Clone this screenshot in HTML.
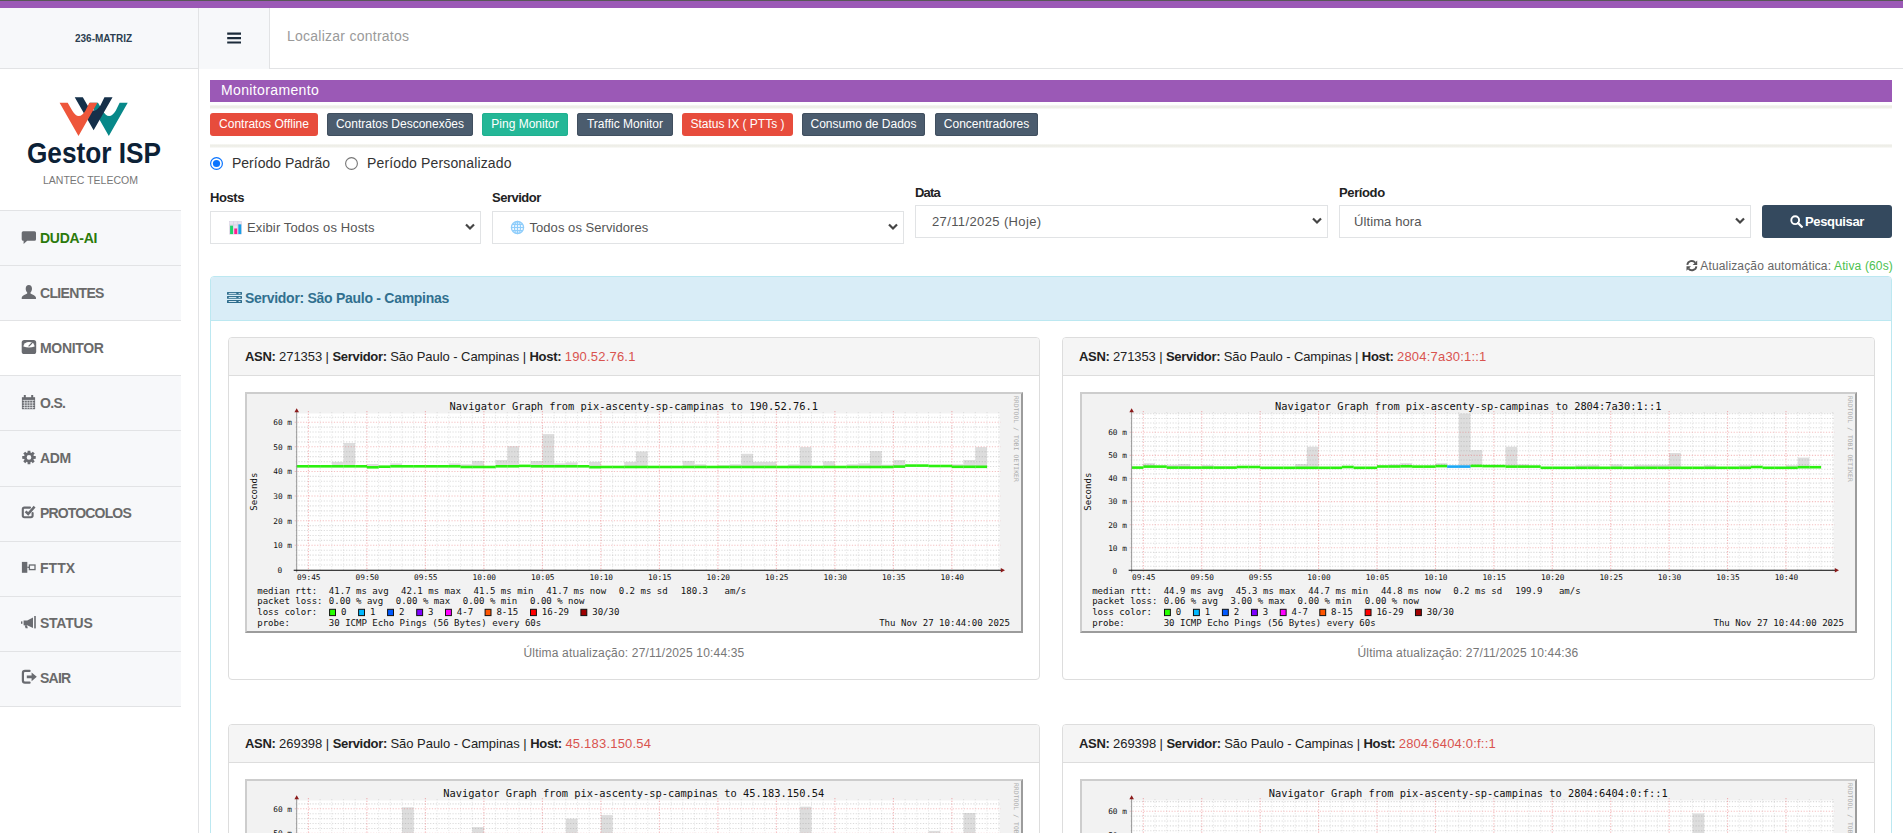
<!DOCTYPE html>
<html lang="pt-br"><head><meta charset="utf-8"><title>Monitoramento</title>
<style>
*{box-sizing:border-box;margin:0;padding:0}
html,body{width:1903px;height:833px;overflow:hidden;background:#fff}
body{font-family:"Liberation Sans",sans-serif;color:#333;position:relative}
.abs{position:absolute}
.t{position:absolute;white-space:nowrap;line-height:1}
#topline{left:0;top:0;width:1903px;height:8px;background:#9b59b6;border-top:1px solid #575757}
#brand{left:0;top:8px;width:198px;height:61px;background:#f7f8fa;border-bottom:1px solid #e2e3e5}
#sideborder{left:198px;top:8px;width:1px;height:825px;background:#e2e3e5}
#burger{left:199px;top:8px;width:71px;height:61px;background:#f7f8fa;border-right:1px solid #e2e3e5}
#hdrline{left:270px;top:68px;width:1633px;height:1px;background:#e2e3e5}
.mi{position:absolute;left:0;width:181px;background:#f7f8fa;border-top:1px solid #e2e3e5}
.mi.act{background:#fff}
.mi b{position:absolute;left:40px;top:20px;font-size:14px;font-weight:bold;color:#6a6a6a;line-height:1;white-space:nowrap}
.mi svg{position:absolute}
#pbar{left:210px;top:80px;width:1682px;height:22px;background:#9b59b6}
.hr{left:210px;width:1682px;height:4px;background:linear-gradient(#f8f8f5,#eeeee8 35%,#efefe9 62%,#fbfbf9)}
.btn{position:absolute;top:113px;height:23px;border-radius:3px;color:#fff;font-size:12px;line-height:23px;text-align:center;white-space:nowrap}
.red{background:#e74c3c}.dk{background:#4b5c6e;box-shadow:inset 0 0 0 1px #404f5f}.grn{background:#24b797;box-shadow:inset 0 0 0 1px #1fb08f}
.lbl{font-weight:bold;font-size:13px;color:#222}
.sel{position:absolute;height:33px;border:1px solid #e1e3e5;background:#fff}
.sel span{position:absolute;top:9px;font-size:13px;color:#555;line-height:1;white-space:nowrap}
.sel svg{position:absolute}
#panel{left:210px;top:276px;width:1682px;height:600px;border:1px solid #bce8f1;border-radius:4px 4px 0 0;background:#fff}
#phead{left:0;top:0;width:1680px;height:44px;background:#d9edf7;border-bottom:1px solid #bce8f1;border-radius:3px 3px 0 0}
.card{position:absolute;width:812px;border:1px solid #ddd;border-radius:4px;background:#fff}
.chead{position:absolute;left:0;top:0;width:810px;height:38px;background:#f5f5f5;border-bottom:1px solid #ddd;border-radius:3px 3px 0 0}
.chead span{position:absolute;left:16px;top:12px;font-size:13px;letter-spacing:-0.1px;line-height:1;color:#222;white-space:nowrap}
.chead i{font-style:normal;color:#d9534f;letter-spacing:0.2px}
.chead b{letter-spacing:-0.32px}
.rrd{display:block}
.upd{position:absolute;left:0;width:810px;text-align:center;font-size:12px;letter-spacing:0.18px;color:#777;line-height:1}
</style></head><body>
<div id="topline" class="abs"></div>
<div id="brand" class="abs"><span class="t" style="left:75px;top:26px;font-size:10px;font-weight:bold;color:#2c3e50">236-MATRIZ</span></div>
<div id="sideborder" class="abs"></div>
<div id="burger" class="abs"><svg class="abs" style="left:28px;top:23.5px" width="15" height="13" viewBox="0 0 15 13"><path d="M0.2 1.6H14M0.2 6.1H14M0.2 10.5H14" stroke="#1c2b3a" stroke-width="2.2"/></svg></div>
<div id="hdrline" class="abs"></div>
<span class="t" style="left:287px;top:29px;font-size:14px;letter-spacing:0.25px;color:#9a9a9a">Localizar contratos</span>
<svg class="abs" style="left:20px;top:90px" width="150" height="80" viewBox="0 0 150 80">
<path d="M69.92 12.73L78.02 12.73L82.64 20.71C84.32 23.71 86.72 26.11 89.12 26.11C91.52 26.11 93.93 23.71 95.73 20.71L99.63 12.85L107.73 12.85L88.82 45.92Z" fill="#078889"/>
<path d="M54.73 7.14L62.83 7.14L67.45 15.13C69.14 18.13 71.54 20.53 73.94 20.53C76.34 20.53 78.74 18.13 80.54 15.13L84.44 7.26L92.55 7.26L73.64 40.34Z" fill="#15304a"/>
<path d="M39.60 12.73L47.71 12.73L52.33 20.71C54.01 23.71 56.41 26.11 58.81 26.11C61.21 26.11 63.61 23.71 65.41 20.71L69.32 12.85L77.42 12.85L58.51 45.92Z" fill="#ee563b"/>
<text x="6.9" y="72.7" font-family="'Liberation Sans',sans-serif" font-weight="bold" font-size="29.3" fill="#0c2136" textLength="134.2" lengthAdjust="spacingAndGlyphs">Gestor ISP</text>
</svg>
<span class="t" style="left:43px;top:175px;font-size:10.5px;color:#777">LANTEC TELECOM</span>
<div class="mi" style="top:210px;height:55px"><svg style="left:21px;top:18px" width="17" height="17" viewBox="0 0 17 17"><path d="M2.2 2.2H13.5Q15 2.2 15 3.7V10.3Q15 11.8 13.5 11.8H6.2L2.6 14.9V11.8H2.2Q0.7 11.8 0.7 10.3V3.7Q0.7 2.2 2.2 2.2Z" fill="#696b70"/></svg><b style="letter-spacing:-0.28px;color:#2b7a0b">DUDA-AI</b></div>
<div class="mi" style="top:265px;height:55px"><svg style="left:21px;top:18px" width="17" height="17" viewBox="0 0 17 17"><path d="M7.8 1.1C9.9 1.1 11 2.7 11 4.7C11 6.2 10.4 7.6 9.5 8.4V9.4C11 10.3 14.3 11.2 14.9 13.2L15 15H0.7L0.8 13.2C1.4 11.2 4.7 10.3 6.2 9.4V8.4C5.3 7.6 4.7 6.2 4.7 4.7C4.7 2.7 5.8 1.1 7.8 1.1Z" fill="#696b70"/></svg><b style="letter-spacing:-0.69px">CLIENTES</b></div>
<div class="mi act" style="top:320px;height:55px"><svg style="left:21px;top:18px" width="17" height="17" viewBox="0 0 17 17"><rect x="0.7" y="1" width="14.5" height="14" rx="2.6" fill="#696b70"/><path d="M2.4 7.6A5.6 4.6 0 0 1 13.6 7.6Q8 9.4 2.4 7.6Z" fill="#fff"/><path d="M7.6 7.4L11 4" stroke="#696b70" stroke-width="1.2"/></svg><b style="letter-spacing:-0.33px">MONITOR</b></div>
<div class="mi" style="top:375px;height:55px"><svg style="left:21px;top:18px" width="17" height="17" viewBox="0 0 17 17"><path d="M0.9 3.2H14.1V15.2H0.9Z" fill="#696b70"/><rect x="2.8" y="1" width="2" height="3" fill="#696b70"/><rect x="10.2" y="1" width="2" height="3" fill="#696b70"/><path d="M1.6 6.4H13.4M1.6 8.9H13.4M1.6 11.3H13.4M1.6 13.6H13.4" stroke="#f7f8fa" stroke-width="0.7"/><path d="M3.6 6.4V15M6.2 6.4V15M8.8 6.4V15M11.4 6.4V15" stroke="#f7f8fa" stroke-width="0.6"/></svg><b style="letter-spacing:-0.7px">O.S.</b></div>
<div class="mi" style="top:430px;height:56px"><svg style="left:21px;top:18px" width="17" height="17" viewBox="0 0 17 17"><path d="M12.78 6.92L14.76 7.03L14.76 9.77L12.78 9.88L12.42 10.73L13.75 12.21L11.81 14.15L10.33 12.82L9.48 13.18L9.37 15.16L6.63 15.16L6.52 13.18L5.67 12.82L4.19 14.15L2.25 12.21L3.58 10.73L3.22 9.88L1.24 9.77L1.24 7.03L3.22 6.92L3.58 6.07L2.25 4.59L4.19 2.65L5.67 3.98L6.52 3.62L6.63 1.64L9.37 1.64L9.48 3.62L10.33 3.98L11.81 2.65L13.75 4.59L12.42 6.07ZM10.30 8.4A2.3 2.3 0 1 0 5.70 8.4A2.3 2.3 0 1 0 10.30 8.4Z" fill="#696b70" fill-rule="evenodd"/></svg><b style="letter-spacing:-0.35px">ADM</b></div>
<div class="mi" style="top:486px;height:55px"><svg style="left:21px;top:17.4px" width="17" height="17" viewBox="0 0 17 17"><path d="M11.6 9V11.6Q11.6 13.3 9.9 13.3H3.4Q1.8 13.3 1.8 11.6V5.3Q1.8 3.6 3.4 3.6H9" fill="none" stroke="#696b70" stroke-width="2.1" stroke-linecap="round"/><path d="M4.6 7.3L7.2 9.9L13.6 2.6" fill="none" stroke="#696b70" stroke-width="2.5"/></svg><b style="top:19px;letter-spacing:-0.84px">PROTOCOLOS</b></div>
<div class="mi" style="top:541px;height:55px"><svg style="left:21px;top:17px" width="17" height="17" viewBox="0 0 17 17"><rect x="0.9" y="2.9" width="5.4" height="10.9" fill="#696b70"/><rect x="8.4" y="6" width="5.6" height="4.6" fill="none" stroke="#696b70" stroke-width="1.3"/><path d="M6.3 8.3H8.4" stroke="#696b70" stroke-width="1.3"/></svg><b style="top:19px;letter-spacing:0.03px">FTTX</b></div>
<div class="mi" style="top:596px;height:55px"><svg style="left:21px;top:18px" width="17" height="17" viewBox="0 0 17 17"><path d="M2.6 5.6H6.2L12 2.4V13L6.2 10.2H2.6Z" fill="#696b70"/><rect x="13.2" y="1" width="1.6" height="12.4" fill="#696b70"/><path d="M3.6 10.2H6L6.8 13.2H4.6Z" fill="#696b70"/><rect x="0" y="6.4" width="1.4" height="2.4" fill="#696b70"/></svg><b style="top:19px;letter-spacing:-0.24px">STATUS</b></div>
<div class="mi" style="top:651px;height:55px"><svg style="left:21px;top:17.3px" width="17" height="17" viewBox="0 0 17 17"><path d="M8.6 1.9H4Q1.9 1.9 1.9 4V11.6Q1.9 13.7 4 13.7H8.6" fill="none" stroke="#696b70" stroke-width="2.2" stroke-linecap="round"/><path d="M5.8 6.4H10.6V3.4L15.8 7.8L10.6 12.2V9.2H5.8Z" fill="#696b70"/></svg><b style="top:19px;letter-spacing:-0.77px">SAIR</b></div>
<div class="abs" style="left:0;top:706px;width:181px;height:1px;background:#e2e3e5"></div>
<div id="pbar" class="abs"><span class="t" style="left:11px;top:3px;font-size:14px;letter-spacing:0.37px;color:#fff">Monitoramento</span></div>
<div class="abs hr" style="top:105px"></div>
<div class="btn red" style="left:210px;width:108px">Contratos Offline</div>
<div class="btn dk" style="left:327px;width:146px">Contratos Desconexões</div>
<div class="btn grn" style="left:482px;width:86px">Ping Monitor</div>
<div class="btn dk" style="left:577px;width:96px">Traffic Monitor</div>
<div class="btn red" style="left:682px;width:111px">Status IX ( PTTs )</div>
<div class="btn dk" style="left:802px;width:123px">Consumo de Dados</div>
<div class="btn dk" style="left:935px;width:103px">Concentradores</div>
<div class="abs hr" style="top:144px"></div>
<svg class="abs" style="left:209px;top:156px" width="16" height="16" viewBox="0 0 16 16"><circle cx="7.5" cy="7.5" r="5.9" fill="#fff" stroke="#0a74ff" stroke-width="1.2"/><circle cx="7.5" cy="7.5" r="3.6" fill="#0a74ff"/></svg>
<span class="t" style="left:232px;top:156px;font-size:14px;color:#333">Período Padrão</span>
<svg class="abs" style="left:344px;top:156px" width="16" height="16" viewBox="0 0 16 16"><circle cx="7.5" cy="7.5" r="5.9" fill="#fff" stroke="#767676" stroke-width="1.1"/></svg>
<span class="t" style="left:367px;top:156px;font-size:14px;letter-spacing:0.14px;color:#333">Período Personalizado</span>
<span class="t lbl" style="left:210px;top:191px;letter-spacing:-0.4px">Hosts</span>
<span class="t lbl" style="left:492px;top:191px;letter-spacing:-0.5px">Servidor</span>
<span class="t lbl" style="left:915px;top:186px;letter-spacing:-0.8px">Data</span>
<span class="t lbl" style="left:1339px;top:186px;letter-spacing:-0.38px">Período</span>
<div class="sel" style="left:210px;top:211px;width:271px"><svg style="left:17.5px;top:8.8px" width="13.6" height="14" viewBox="0 0 15 15" preserveAspectRatio="none"><rect x="0.5" y="0.5" width="13.5" height="13.5" fill="#e9e3f0" stroke="#d5cfe0" stroke-width="0.6"/><path d="M0.5 4.3H14M5 0.5V14M9.6 0.5V14" stroke="#cfc7dc" stroke-width="0.6"/><rect x="1.2" y="5" width="3.2" height="9" fill="#1fd36a"/><rect x="5.8" y="8" width="3.2" height="6" fill="#ff1f8e"/><rect x="10.3" y="3.6" width="3.2" height="10.4" fill="#1aa0e8"/></svg><span style="left:36px;letter-spacing:0.14px">Exibir Todos os Hosts</span><svg style="right:5px;top:11.3px" width="10" height="8" viewBox="0 0 10 8"><path d="M1 1.5L5 5.5L9 1.5" fill="none" stroke="#454545" stroke-width="2.2"/></svg></div>
<div class="sel" style="left:492px;top:211px;width:412px"><svg style="left:17px;top:8px" width="15" height="15" viewBox="0 0 15 15"><circle cx="7.5" cy="7.5" r="6.1" fill="#f2f9ff" stroke="#8ecdfb" stroke-width="1.3"/><path d="M1.2 7.5H13.8M7.5 1.2V13.8M2.4 4.3H12.6M2.4 10.7H12.6" stroke="#8ecdfb" stroke-width="1.2" fill="none"/><ellipse cx="7.5" cy="7.5" rx="3" ry="6.1" fill="none" stroke="#8ecdfb" stroke-width="1.2"/></svg><span style="left:36.5px;letter-spacing:0.05px">Todos os Servidores</span><svg style="right:5px;top:11.3px" width="10" height="8" viewBox="0 0 10 8"><path d="M1 1.5L5 5.5L9 1.5" fill="none" stroke="#454545" stroke-width="2.2"/></svg></div>
<div class="sel" style="left:915px;top:205px;width:413px"><span style="left:16px;letter-spacing:0.38px">27/11/2025 (Hoje)</span><svg style="right:5px;top:11.3px" width="10" height="8" viewBox="0 0 10 8"><path d="M1 1.5L5 5.5L9 1.5" fill="none" stroke="#454545" stroke-width="2.2"/></svg></div>
<div class="sel" style="left:1339px;top:205px;width:412px"><span style="left:14px;letter-spacing:0.1px">Última hora</span><svg style="right:5px;top:11.3px" width="10" height="8" viewBox="0 0 10 8"><path d="M1 1.5L5 5.5L9 1.5" fill="none" stroke="#454545" stroke-width="2.2"/></svg></div>
<div class="abs" id="pesq" style="left:1762px;top:205px;width:130px;height:33px;background:#34495e;border-radius:3px"><svg class="abs" style="left:28px;top:10px" width="13" height="13" viewBox="0 0 13 13"><circle cx="5.2" cy="5.2" r="3.9" fill="none" stroke="#fff" stroke-width="1.9"/><path d="M8 8L11.8 11.8" stroke="#fff" stroke-width="2.3" stroke-linecap="round"/></svg><span class="t" style="left:43px;top:10px;font-size:13px;font-weight:bold;letter-spacing:-0.35px;color:#fff">Pesquisar</span></div>
<svg class="abs" style="left:1686px;top:260px" width="12" height="12" viewBox="0 0 12 12"><path d="M1.3 4.9A4.5 4.5 0 0 1 9.2 2.6M10.4 6.3A4.5 4.5 0 0 1 2.5 8.6" fill="none" stroke="#555" stroke-width="1.9"/><path d="M11.2 0.4V4.9H6.7Z M0.5 10.8V6.3H5Z" fill="#555"/></svg>
<span class="t" id="auto" style="right:10px;top:260px;font-size:12px;letter-spacing:0.15px;color:#666">Atualização automática: <span style="color:#4cc14f">Ativa (60s)</span></span>
<div id="panel" class="abs"><div id="phead" class="abs"></div></div>
<svg class="abs" style="left:227px;top:291px" width="16" height="13" viewBox="0 0 16 13"><rect x="0" y="0.9" width="15" height="2.9" rx="0.5" fill="#2e6d8d"/><rect x="1.7" y="1.9" width="7.6" height="0.9" fill="#e4f2fa"/><rect x="11.6" y="1.9" width="1.9" height="0.9" fill="#e4f2fa"/><rect x="0" y="4.95" width="15" height="2.9" rx="0.5" fill="#2e6d8d"/><rect x="1.7" y="5.95" width="7.6" height="0.9" fill="#e4f2fa"/><rect x="11.6" y="5.95" width="1.9" height="0.9" fill="#e4f2fa"/><rect x="0" y="9.0" width="15" height="2.9" rx="0.5" fill="#2e6d8d"/><rect x="1.7" y="10.0" width="7.6" height="0.9" fill="#e4f2fa"/><rect x="11.6" y="10.0" width="1.9" height="0.9" fill="#e4f2fa"/></svg><span class="t" style="left:245px;top:291px;font-size:14px;font-weight:bold;letter-spacing:-0.28px;color:#31708f">Servidor: São Paulo - Campinas</span>
<div class="card" style="left:228px;top:337px;height:343px;width:812px"><div class="chead" style="width:810px"><span style="letter-spacing:-0.06px"><b>ASN:</b> 271353 | <b>Servidor:</b> São Paulo - Campinas | <b>Host:</b> <i>190.52.76.1</i></span></div><div class="abs" style="left:16px;top:54px;width:778px;height:241px;overflow:hidden"><svg class="rrd" width="778" height="241" viewBox="0 0 778 241" preserveAspectRatio="none" font-family="'DejaVu Sans Mono','Liberation Mono',monospace">
<rect x="0" y="0" width="778" height="241" fill="#f2f2f2"/>
<path d="M0 0H778V2H2V241H0Z" fill="#cdcdcd"/>
<path d="M778 0V241H0L2 239H776V2Z" fill="#9c9c9c"/>
<g transform="translate(0.3 0.3)">
<rect x="51.4" y="21.2" width="702.9" height="156.8" fill="#fff"/>
<rect x="86.5" y="69.6" width="11.7" height="4.4" fill="#d9d9d9" fill-opacity="0.9"/>
<rect x="98.2" y="50.7" width="11.7" height="23.3" fill="#d9d9d9" fill-opacity="0.9"/>
<rect x="121.6" y="71.7" width="11.7" height="3.3" fill="#d9d9d9" fill-opacity="0.9"/>
<rect x="145.0" y="71.1" width="11.7" height="2.9" fill="#d9d9d9" fill-opacity="0.9"/>
<rect x="203.5" y="71.1" width="11.7" height="2.9" fill="#d9d9d9" fill-opacity="0.9"/>
<rect x="215.2" y="72.0" width="11.7" height="2.7" fill="#d9d9d9" fill-opacity="0.9"/>
<rect x="226.9" y="68.6" width="11.7" height="6.1" fill="#d9d9d9" fill-opacity="0.9"/>
<rect x="250.3" y="67.7" width="11.7" height="6.3" fill="#d9d9d9" fill-opacity="0.9"/>
<rect x="262.0" y="53.9" width="11.7" height="20.1" fill="#d9d9d9" fill-opacity="0.9"/>
<rect x="285.4" y="68.7" width="11.7" height="5.3" fill="#d9d9d9" fill-opacity="0.9"/>
<rect x="297.1" y="41.8" width="11.7" height="32.2" fill="#d9d9d9" fill-opacity="0.9"/>
<rect x="308.8" y="71.1" width="11.7" height="2.9" fill="#d9d9d9" fill-opacity="0.9"/>
<rect x="320.5" y="70.1" width="11.7" height="3.9" fill="#d9d9d9" fill-opacity="0.9"/>
<rect x="343.9" y="69.6" width="11.7" height="5.3" fill="#d9d9d9" fill-opacity="0.9"/>
<rect x="379.0" y="69.6" width="11.7" height="5.1" fill="#d9d9d9" fill-opacity="0.9"/>
<rect x="390.7" y="59.2" width="11.7" height="15.5" fill="#d9d9d9" fill-opacity="0.9"/>
<rect x="437.5" y="68.6" width="11.7" height="6.1" fill="#d9d9d9" fill-opacity="0.9"/>
<rect x="449.2" y="72.0" width="11.7" height="2.7" fill="#d9d9d9" fill-opacity="0.9"/>
<rect x="472.6" y="72.9" width="11.7" height="1.8" fill="#d9d9d9" fill-opacity="0.9"/>
<rect x="484.3" y="72.0" width="11.7" height="2.7" fill="#d9d9d9" fill-opacity="0.9"/>
<rect x="496.0" y="61.5" width="11.7" height="13.2" fill="#d9d9d9" fill-opacity="0.9"/>
<rect x="507.7" y="69.6" width="11.7" height="5.1" fill="#d9d9d9" fill-opacity="0.9"/>
<rect x="519.4" y="69.6" width="11.7" height="5.1" fill="#d9d9d9" fill-opacity="0.9"/>
<rect x="542.8" y="72.0" width="11.7" height="2.7" fill="#d9d9d9" fill-opacity="0.9"/>
<rect x="554.5" y="54.8" width="11.7" height="19.9" fill="#d9d9d9" fill-opacity="0.9"/>
<rect x="577.9" y="69.0" width="11.7" height="5.7" fill="#d9d9d9" fill-opacity="0.9"/>
<rect x="601.3" y="72.0" width="11.7" height="2.7" fill="#d9d9d9" fill-opacity="0.9"/>
<rect x="613.0" y="71.1" width="11.7" height="3.6" fill="#d9d9d9" fill-opacity="0.9"/>
<rect x="624.7" y="58.8" width="11.7" height="15.9" fill="#d9d9d9" fill-opacity="0.9"/>
<rect x="636.4" y="72.4" width="11.7" height="2.3" fill="#d9d9d9" fill-opacity="0.9"/>
<rect x="648.1" y="67.7" width="11.7" height="6.6" fill="#d9d9d9" fill-opacity="0.9"/>
<rect x="706.6" y="72.0" width="11.7" height="2.5" fill="#d9d9d9" fill-opacity="0.9"/>
<rect x="718.3" y="67.7" width="11.7" height="6.8" fill="#d9d9d9" fill-opacity="0.9"/>
<rect x="730.0" y="54.8" width="11.7" height="19.7" fill="#d9d9d9" fill-opacity="0.9"/>
<path d="M50.4 172.70H755.3M50.4 167.77H755.3M50.4 162.85H755.3M50.4 157.92H755.3M50.4 148.08H755.3M50.4 143.15H755.3M50.4 138.23H755.3M50.4 133.30H755.3M50.4 123.46H755.3M50.4 118.53H755.3M50.4 113.61H755.3M50.4 108.68H755.3M50.4 98.84H755.3M50.4 93.91H755.3M50.4 88.99H755.3M50.4 84.06H755.3M50.4 74.22H755.3M50.4 69.29H755.3M50.4 64.37H755.3M50.4 59.44H755.3M50.4 49.60H755.3M50.4 44.67H755.3M50.4 39.75H755.3M50.4 34.82H755.3M50.4 24.98H755.3" stroke="#8f8f8f" stroke-opacity="0.32" stroke-width="1.1" stroke-dasharray="1.2 1.6" fill="none"/>
<path d="M51.40 19.7V179.0M74.80 19.7V179.0M86.50 19.7V179.0M98.20 19.7V179.0M109.90 19.7V179.0M133.30 19.7V179.0M145.00 19.7V179.0M156.70 19.7V179.0M168.40 19.7V179.0M191.80 19.7V179.0M203.50 19.7V179.0M215.20 19.7V179.0M226.90 19.7V179.0M250.30 19.7V179.0M262.00 19.7V179.0M273.70 19.7V179.0M285.40 19.7V179.0M308.80 19.7V179.0M320.50 19.7V179.0M332.20 19.7V179.0M343.90 19.7V179.0M367.30 19.7V179.0M379.00 19.7V179.0M390.70 19.7V179.0M402.40 19.7V179.0M425.80 19.7V179.0M437.50 19.7V179.0M449.20 19.7V179.0M460.90 19.7V179.0M484.30 19.7V179.0M496.00 19.7V179.0M507.70 19.7V179.0M519.40 19.7V179.0M542.80 19.7V179.0M554.50 19.7V179.0M566.20 19.7V179.0M577.90 19.7V179.0M601.30 19.7V179.0M613.00 19.7V179.0M624.70 19.7V179.0M636.40 19.7V179.0M659.80 19.7V179.0M671.50 19.7V179.0M683.20 19.7V179.0M694.90 19.7V179.0M718.30 19.7V179.0M730.00 19.7V179.0M741.70 19.7V179.0M753.40 19.7V179.0" stroke="#8f8f8f" stroke-opacity="0.2" stroke-width="1.1" stroke-dasharray="1.2 1.6" fill="none"/>
<path d="M49.4 153.00H755.3M49.4 128.38H755.3M49.4 103.76H755.3M49.4 79.14H755.3M49.4 54.52H755.3M49.4 29.90H755.3" stroke="#e8686c" stroke-opacity="0.42" stroke-width="1.1" stroke-dasharray="1.2 1.6" fill="none"/>
<path d="M63.10 18.7V180.0M121.60 18.7V180.0M180.10 18.7V180.0M238.60 18.7V180.0M297.10 18.7V180.0M355.60 18.7V180.0M414.10 18.7V180.0M472.60 18.7V180.0M531.10 18.7V180.0M589.60 18.7V180.0M648.10 18.7V180.0M706.60 18.7V180.0" stroke="#e8686c" stroke-opacity="0.48" stroke-width="1.1" stroke-dasharray="1.2 1.6" fill="none"/>
<rect x="51.4" y="72.7" width="11.8" height="2.6" fill="#2bf00f"/>
<rect x="63.1" y="72.7" width="11.8" height="2.6" fill="#2bf00f"/>
<rect x="74.8" y="72.7" width="11.8" height="2.6" fill="#2bf00f"/>
<rect x="86.5" y="72.7" width="11.8" height="2.6" fill="#2bf00f"/>
<rect x="98.2" y="72.7" width="11.8" height="2.6" fill="#2bf00f"/>
<rect x="109.9" y="72.7" width="11.8" height="2.6" fill="#2bf00f"/>
<rect x="121.6" y="73.7" width="11.8" height="2.6" fill="#2bf00f"/>
<rect x="133.3" y="73.1" width="11.8" height="2.6" fill="#2bf00f"/>
<rect x="145.0" y="72.7" width="11.8" height="2.6" fill="#2bf00f"/>
<rect x="156.7" y="72.7" width="11.8" height="2.6" fill="#2bf00f"/>
<rect x="168.4" y="72.7" width="11.8" height="2.6" fill="#2bf00f"/>
<rect x="180.1" y="72.7" width="11.8" height="2.6" fill="#2bf00f"/>
<rect x="191.8" y="72.7" width="11.8" height="2.6" fill="#2bf00f"/>
<rect x="203.5" y="72.7" width="11.8" height="2.6" fill="#2bf00f"/>
<rect x="215.2" y="73.4" width="11.8" height="2.6" fill="#2bf00f"/>
<rect x="226.9" y="73.4" width="11.8" height="2.6" fill="#2bf00f"/>
<rect x="238.6" y="73.4" width="11.8" height="2.6" fill="#2bf00f"/>
<rect x="250.3" y="72.7" width="11.8" height="2.6" fill="#2bf00f"/>
<rect x="262.0" y="72.7" width="11.8" height="2.6" fill="#2bf00f"/>
<rect x="273.7" y="72.3" width="11.8" height="2.6" fill="#2bf00f"/>
<rect x="285.4" y="72.7" width="11.8" height="2.6" fill="#2bf00f"/>
<rect x="297.1" y="72.7" width="11.8" height="2.6" fill="#2bf00f"/>
<rect x="308.8" y="72.7" width="11.8" height="2.6" fill="#2bf00f"/>
<rect x="320.5" y="72.7" width="11.8" height="2.6" fill="#2bf00f"/>
<rect x="332.2" y="72.7" width="11.8" height="2.6" fill="#2bf00f"/>
<rect x="343.9" y="73.6" width="11.8" height="2.6" fill="#2bf00f"/>
<rect x="355.6" y="73.4" width="11.8" height="2.6" fill="#2bf00f"/>
<rect x="367.3" y="73.4" width="11.8" height="2.6" fill="#2bf00f"/>
<rect x="379.0" y="73.4" width="11.8" height="2.6" fill="#2bf00f"/>
<rect x="390.7" y="73.4" width="11.8" height="2.6" fill="#2bf00f"/>
<rect x="402.4" y="73.4" width="11.8" height="2.6" fill="#2bf00f"/>
<rect x="414.1" y="73.4" width="11.8" height="2.6" fill="#2bf00f"/>
<rect x="425.8" y="73.4" width="11.8" height="2.6" fill="#2bf00f"/>
<rect x="437.5" y="73.4" width="11.8" height="2.6" fill="#2bf00f"/>
<rect x="449.2" y="73.4" width="11.8" height="2.6" fill="#2bf00f"/>
<rect x="460.9" y="73.4" width="11.8" height="2.6" fill="#2bf00f"/>
<rect x="472.6" y="73.4" width="11.8" height="2.6" fill="#2bf00f"/>
<rect x="484.3" y="73.4" width="11.8" height="2.6" fill="#2bf00f"/>
<rect x="496.0" y="73.4" width="11.8" height="2.6" fill="#2bf00f"/>
<rect x="507.7" y="73.4" width="11.8" height="2.6" fill="#2bf00f"/>
<rect x="519.4" y="73.4" width="11.8" height="2.6" fill="#2bf00f"/>
<rect x="531.1" y="73.4" width="11.8" height="2.6" fill="#2bf00f"/>
<rect x="542.8" y="73.4" width="11.8" height="2.6" fill="#2bf00f"/>
<rect x="554.5" y="73.4" width="11.8" height="2.6" fill="#2bf00f"/>
<rect x="566.2" y="73.4" width="11.8" height="2.6" fill="#2bf00f"/>
<rect x="577.9" y="73.4" width="11.8" height="2.6" fill="#2bf00f"/>
<rect x="589.6" y="73.4" width="11.8" height="2.6" fill="#2bf00f"/>
<rect x="601.3" y="73.4" width="11.8" height="2.6" fill="#2bf00f"/>
<rect x="613.0" y="73.4" width="11.8" height="2.6" fill="#2bf00f"/>
<rect x="624.7" y="73.4" width="11.8" height="2.6" fill="#2bf00f"/>
<rect x="636.4" y="73.4" width="11.8" height="2.6" fill="#2bf00f"/>
<rect x="648.1" y="73.0" width="11.8" height="2.6" fill="#2bf00f"/>
<rect x="659.8" y="72.0" width="11.8" height="2.6" fill="#2bf00f"/>
<rect x="671.5" y="72.0" width="11.8" height="2.6" fill="#2bf00f"/>
<rect x="683.2" y="72.4" width="11.8" height="2.6" fill="#2bf00f"/>
<rect x="694.9" y="72.4" width="11.8" height="2.6" fill="#2bf00f"/>
<rect x="706.6" y="73.2" width="11.8" height="2.6" fill="#2bf00f"/>
<rect x="718.3" y="73.2" width="11.8" height="2.6" fill="#2bf00f"/>
<rect x="730.0" y="73.2" width="11.8" height="2.6" fill="#2bf00f"/>
<path d="M51.4 19.2V180.0" stroke="#8c8c8c" stroke-width="0.9" fill="none"/>
<path d="M48.4 178.0H756.3" stroke="#000" stroke-width="1.1" fill="none"/>
<path d="M49.1 20.0L51.4 16.0L53.7 20.0Z" fill="#8b1a1a"/>
<path d="M755.5 175.7L759.7 178.0L755.5 180.3Z" fill="#8b1a1a"/>
<text x="388.4" y="18.2" font-size="10.38" text-anchor="middle" fill="#111">Navigator Graph from pix-ascenty-sp-campinas to 190.52.76.1</text>
<text x="37.0" y="180.5" font-size="7.8" text-anchor="end" fill="#111">0</text>
<text x="46.7" y="155.9" font-size="7.8" text-anchor="end" fill="#111">10 m</text>
<text x="46.7" y="131.3" font-size="7.8" text-anchor="end" fill="#111">20 m</text>
<text x="46.7" y="106.7" font-size="7.8" text-anchor="end" fill="#111">30 m</text>
<text x="46.7" y="82.0" font-size="7.8" text-anchor="end" fill="#111">40 m</text>
<text x="46.7" y="57.4" font-size="7.8" text-anchor="end" fill="#111">50 m</text>
<text x="46.7" y="32.8" font-size="7.8" text-anchor="end" fill="#111">60 m</text>
<text transform="translate(11.2 99.4) rotate(-90)" font-size="9.05" text-anchor="middle" fill="#111">Seconds</text>
<text x="63.5" y="187.9" font-size="7.8" text-anchor="middle" fill="#111">09:45</text>
<text x="122.0" y="187.9" font-size="7.8" text-anchor="middle" fill="#111">09:50</text>
<text x="180.5" y="187.9" font-size="7.8" text-anchor="middle" fill="#111">09:55</text>
<text x="239.0" y="187.9" font-size="7.8" text-anchor="middle" fill="#111">10:00</text>
<text x="297.5" y="187.9" font-size="7.8" text-anchor="middle" fill="#111">10:05</text>
<text x="356.0" y="187.9" font-size="7.8" text-anchor="middle" fill="#111">10:10</text>
<text x="414.5" y="187.9" font-size="7.8" text-anchor="middle" fill="#111">10:15</text>
<text x="473.0" y="187.9" font-size="7.8" text-anchor="middle" fill="#111">10:20</text>
<text x="531.5" y="187.9" font-size="7.8" text-anchor="middle" fill="#111">10:25</text>
<text x="590.0" y="187.9" font-size="7.8" text-anchor="middle" fill="#111">10:30</text>
<text x="648.5" y="187.9" font-size="7.8" text-anchor="middle" fill="#111">10:35</text>
<text x="707.0" y="187.9" font-size="7.8" text-anchor="middle" fill="#111">10:40</text>
<text x="11.9" y="201.3" font-size="9.05" fill="#111" text-anchor="start">median rtt:</text>
<text x="83.5" y="201.3" font-size="9.05" fill="#111" text-anchor="start">41.7 ms avg</text>
<text x="155.7" y="201.3" font-size="9.05" fill="#111" text-anchor="start">42.1 ms max</text>
<text x="228.3" y="201.3" font-size="9.05" fill="#111" text-anchor="start">41.5 ms min</text>
<text x="301.0" y="201.3" font-size="9.05" fill="#111" text-anchor="start">41.7 ms now</text>
<text x="373.4" y="201.3" font-size="9.05" fill="#111" text-anchor="start">0.2 ms sd</text>
<text x="435.5" y="201.3" font-size="9.05" fill="#111" text-anchor="start">180.3</text>
<text x="479.2" y="201.3" font-size="9.05" fill="#111" text-anchor="start">am/s</text>
<text x="11.9" y="212.2" font-size="9.05" fill="#111" text-anchor="start">packet loss:</text>
<text x="83.5" y="212.2" font-size="9.05" fill="#111" text-anchor="start">0.00 % avg</text>
<text x="150.4" y="212.2" font-size="9.05" fill="#111" text-anchor="start">0.00 % max</text>
<text x="217.4" y="212.2" font-size="9.05" fill="#111" text-anchor="start">0.00 % min</text>
<text x="284.7" y="212.2" font-size="9.05" fill="#111" text-anchor="start">0.00 % now</text>
<text x="11.9" y="223.1" font-size="9.05" fill="#111" text-anchor="start">loss color:</text>
<rect x="84.3" y="217.0" width="5.9" height="6.3" fill="#26ff00" stroke="#111" stroke-width="1"/>
<text x="95.6" y="223.1" font-size="9.05" fill="#111" text-anchor="start">0</text>
<rect x="113.3" y="217.0" width="5.9" height="6.3" fill="#00b8ff" stroke="#111" stroke-width="1"/>
<text x="124.6" y="223.1" font-size="9.05" fill="#111" text-anchor="start">1</text>
<rect x="142.3" y="217.0" width="5.9" height="6.3" fill="#0059ff" stroke="#111" stroke-width="1"/>
<text x="153.6" y="223.1" font-size="9.05" fill="#111" text-anchor="start">2</text>
<rect x="171.4" y="217.0" width="5.9" height="6.3" fill="#7e00ff" stroke="#111" stroke-width="1"/>
<text x="182.7" y="223.1" font-size="9.05" fill="#111" text-anchor="start">3</text>
<rect x="200.2" y="217.0" width="5.9" height="6.3" fill="#ff00ff" stroke="#111" stroke-width="1"/>
<text x="211.5" y="223.1" font-size="9.05" fill="#111" text-anchor="start">4-7</text>
<rect x="239.8" y="217.0" width="5.9" height="6.3" fill="#ff5500" stroke="#111" stroke-width="1"/>
<text x="251.1" y="223.1" font-size="9.05" fill="#111" text-anchor="start">8-15</text>
<rect x="285.2" y="217.0" width="5.9" height="6.3" fill="#ff0000" stroke="#111" stroke-width="1"/>
<text x="296.5" y="223.1" font-size="9.05" fill="#111" text-anchor="start">16-29</text>
<rect x="335.6" y="217.0" width="5.9" height="6.3" fill="#a00000" stroke="#111" stroke-width="1"/>
<text x="346.9" y="223.1" font-size="9.05" fill="#111" text-anchor="start">30/30</text>
<text x="11.9" y="233.9" font-size="9.05" fill="#111" text-anchor="start">probe:</text>
<text x="83.5" y="233.9" font-size="9.05" fill="#111" text-anchor="start">30 ICMP Echo Pings (56 Bytes) every 60s</text>
<text x="764.6" y="233.9" font-size="9.05" fill="#111" text-anchor="end">Thu Nov 27 10:44:00 2025</text>
<text transform="translate(768.2 3.6) rotate(90)" font-size="6.3" fill="#adadad" letter-spacing="0.12">RRDTOOL / TOBI OETIKER</text>
</g></svg></div><div class="upd" style="top:309px">Última atualização: 27/11/2025 10:44:35</div></div>
<div class="card" style="left:1062px;top:337px;height:343px;width:813px"><div class="chead" style="width:811px"><span style="letter-spacing:-0.11px"><b>ASN:</b> 271353 | <b>Servidor:</b> São Paulo - Campinas | <b>Host:</b> <i>2804:7a30:1::1</i></span></div><div class="abs" style="left:17px;top:54px;width:778px;height:241px;overflow:hidden"><svg class="rrd" width="777" height="241" viewBox="0 0 778 241" preserveAspectRatio="none" font-family="'DejaVu Sans Mono','Liberation Mono',monospace">
<rect x="0" y="0" width="778" height="241" fill="#f2f2f2"/>
<path d="M0 0H778V2H2V241H0Z" fill="#cdcdcd"/>
<path d="M778 0V241H0L2 239H776V2Z" fill="#9c9c9c"/>
<g transform="translate(0.3 0.3)">
<rect x="51.4" y="21.2" width="702.9" height="156.8" fill="#fff"/>
<rect x="63.1" y="70.9" width="11.7" height="3.4" fill="#d9d9d9" fill-opacity="0.9"/>
<rect x="86.5" y="72.5" width="11.7" height="2.8" fill="#d9d9d9" fill-opacity="0.9"/>
<rect x="98.2" y="71.7" width="11.7" height="3.6" fill="#d9d9d9" fill-opacity="0.9"/>
<rect x="121.6" y="72.8" width="11.7" height="2.5" fill="#d9d9d9" fill-opacity="0.9"/>
<rect x="215.2" y="71.7" width="11.7" height="3.8" fill="#d9d9d9" fill-opacity="0.9"/>
<rect x="226.9" y="54.5" width="11.7" height="21.0" fill="#d9d9d9" fill-opacity="0.9"/>
<rect x="308.8" y="72.1" width="11.7" height="2.1" fill="#d9d9d9" fill-opacity="0.9"/>
<rect x="320.5" y="70.9" width="11.7" height="3.0" fill="#d9d9d9" fill-opacity="0.9"/>
<rect x="355.6" y="70.9" width="11.7" height="2.8" fill="#d9d9d9" fill-opacity="0.9"/>
<rect x="379.0" y="21.2" width="11.7" height="53.1" fill="#d9d9d9" fill-opacity="0.9"/>
<rect x="390.7" y="57.7" width="11.7" height="15.9" fill="#d9d9d9" fill-opacity="0.9"/>
<rect x="425.8" y="54.5" width="11.7" height="19.9" fill="#d9d9d9" fill-opacity="0.9"/>
<rect x="437.5" y="72.1" width="11.7" height="2.3" fill="#d9d9d9" fill-opacity="0.9"/>
<rect x="496.0" y="73.0" width="11.7" height="2.5" fill="#d9d9d9" fill-opacity="0.9"/>
<rect x="507.7" y="72.5" width="11.7" height="3.0" fill="#d9d9d9" fill-opacity="0.9"/>
<rect x="531.1" y="72.1" width="11.7" height="3.4" fill="#d9d9d9" fill-opacity="0.9"/>
<rect x="554.5" y="72.5" width="11.7" height="3.0" fill="#d9d9d9" fill-opacity="0.9"/>
<rect x="566.2" y="72.5" width="11.7" height="3.0" fill="#d9d9d9" fill-opacity="0.9"/>
<rect x="577.9" y="72.5" width="11.7" height="3.0" fill="#d9d9d9" fill-opacity="0.9"/>
<rect x="589.6" y="60.7" width="11.7" height="14.8" fill="#d9d9d9" fill-opacity="0.9"/>
<rect x="624.7" y="72.8" width="11.7" height="2.6" fill="#d9d9d9" fill-opacity="0.9"/>
<rect x="659.8" y="73.0" width="11.7" height="2.5" fill="#d9d9d9" fill-opacity="0.9"/>
<rect x="706.6" y="73.0" width="11.7" height="2.5" fill="#d9d9d9" fill-opacity="0.9"/>
<rect x="718.3" y="65.3" width="11.7" height="9.6" fill="#d9d9d9" fill-opacity="0.9"/>
<path d="M50.4 173.98H755.3M50.4 169.36H755.3M50.4 164.74H755.3M50.4 160.12H755.3M50.4 150.88H755.3M50.4 146.26H755.3M50.4 141.64H755.3M50.4 137.02H755.3M50.4 127.78H755.3M50.4 123.16H755.3M50.4 118.54H755.3M50.4 113.92H755.3M50.4 104.68H755.3M50.4 100.06H755.3M50.4 95.44H755.3M50.4 90.82H755.3M50.4 81.58H755.3M50.4 76.96H755.3M50.4 72.34H755.3M50.4 67.72H755.3M50.4 58.48H755.3M50.4 53.86H755.3M50.4 49.24H755.3M50.4 44.62H755.3M50.4 35.38H755.3M50.4 30.76H755.3M50.4 26.14H755.3M50.4 21.52H755.3" stroke="#8f8f8f" stroke-opacity="0.32" stroke-width="1.1" stroke-dasharray="1.2 1.6" fill="none"/>
<path d="M51.40 19.7V179.0M74.80 19.7V179.0M86.50 19.7V179.0M98.20 19.7V179.0M109.90 19.7V179.0M133.30 19.7V179.0M145.00 19.7V179.0M156.70 19.7V179.0M168.40 19.7V179.0M191.80 19.7V179.0M203.50 19.7V179.0M215.20 19.7V179.0M226.90 19.7V179.0M250.30 19.7V179.0M262.00 19.7V179.0M273.70 19.7V179.0M285.40 19.7V179.0M308.80 19.7V179.0M320.50 19.7V179.0M332.20 19.7V179.0M343.90 19.7V179.0M367.30 19.7V179.0M379.00 19.7V179.0M390.70 19.7V179.0M402.40 19.7V179.0M425.80 19.7V179.0M437.50 19.7V179.0M449.20 19.7V179.0M460.90 19.7V179.0M484.30 19.7V179.0M496.00 19.7V179.0M507.70 19.7V179.0M519.40 19.7V179.0M542.80 19.7V179.0M554.50 19.7V179.0M566.20 19.7V179.0M577.90 19.7V179.0M601.30 19.7V179.0M613.00 19.7V179.0M624.70 19.7V179.0M636.40 19.7V179.0M659.80 19.7V179.0M671.50 19.7V179.0M683.20 19.7V179.0M694.90 19.7V179.0M718.30 19.7V179.0M730.00 19.7V179.0M741.70 19.7V179.0M753.40 19.7V179.0" stroke="#8f8f8f" stroke-opacity="0.2" stroke-width="1.1" stroke-dasharray="1.2 1.6" fill="none"/>
<path d="M49.4 155.50H755.3M49.4 132.40H755.3M49.4 109.30H755.3M49.4 86.20H755.3M49.4 63.10H755.3M49.4 40.00H755.3" stroke="#e8686c" stroke-opacity="0.42" stroke-width="1.1" stroke-dasharray="1.2 1.6" fill="none"/>
<path d="M63.10 18.7V180.0M121.60 18.7V180.0M180.10 18.7V180.0M238.60 18.7V180.0M297.10 18.7V180.0M355.60 18.7V180.0M414.10 18.7V180.0M472.60 18.7V180.0M531.10 18.7V180.0M589.60 18.7V180.0M648.10 18.7V180.0M706.60 18.7V180.0" stroke="#e8686c" stroke-opacity="0.48" stroke-width="1.1" stroke-dasharray="1.2 1.6" fill="none"/>
<rect x="51.4" y="74.0" width="11.8" height="2.6" fill="#2bf00f"/>
<rect x="63.1" y="73.0" width="11.8" height="2.6" fill="#2bf00f"/>
<rect x="74.8" y="73.0" width="11.8" height="2.6" fill="#2bf00f"/>
<rect x="86.5" y="74.0" width="11.8" height="2.6" fill="#2bf00f"/>
<rect x="98.2" y="74.0" width="11.8" height="2.6" fill="#2bf00f"/>
<rect x="109.9" y="74.0" width="11.8" height="2.6" fill="#2bf00f"/>
<rect x="121.6" y="74.0" width="11.8" height="2.6" fill="#2bf00f"/>
<rect x="133.3" y="74.0" width="11.8" height="2.6" fill="#2bf00f"/>
<rect x="145.0" y="74.0" width="11.8" height="2.6" fill="#2bf00f"/>
<rect x="156.7" y="73.4" width="11.8" height="2.6" fill="#2bf00f"/>
<rect x="168.4" y="73.4" width="11.8" height="2.6" fill="#2bf00f"/>
<rect x="180.1" y="74.2" width="11.8" height="2.6" fill="#2bf00f"/>
<rect x="191.8" y="74.2" width="11.8" height="2.6" fill="#2bf00f"/>
<rect x="203.5" y="74.2" width="11.8" height="2.6" fill="#2bf00f"/>
<rect x="215.2" y="74.2" width="11.8" height="2.6" fill="#2bf00f"/>
<rect x="226.9" y="74.2" width="11.8" height="2.6" fill="#2bf00f"/>
<rect x="238.6" y="74.2" width="11.8" height="2.6" fill="#2bf00f"/>
<rect x="250.3" y="74.2" width="11.8" height="2.6" fill="#2bf00f"/>
<rect x="262.0" y="73.4" width="11.8" height="2.6" fill="#2bf00f"/>
<rect x="273.7" y="74.2" width="11.8" height="2.6" fill="#2bf00f"/>
<rect x="285.4" y="74.2" width="11.8" height="2.6" fill="#2bf00f"/>
<rect x="297.1" y="72.9" width="11.8" height="2.6" fill="#2bf00f"/>
<rect x="308.8" y="72.9" width="11.8" height="2.6" fill="#2bf00f"/>
<rect x="320.5" y="72.7" width="11.8" height="2.6" fill="#2bf00f"/>
<rect x="332.2" y="73.0" width="11.8" height="2.6" fill="#2bf00f"/>
<rect x="343.9" y="73.0" width="11.8" height="2.6" fill="#2bf00f"/>
<rect x="355.6" y="72.5" width="11.8" height="2.6" fill="#2bf00f"/>
<rect x="367.3" y="73.0" width="11.8" height="2.6" fill="#1aa8f5"/>
<rect x="379.0" y="73.0" width="11.8" height="2.6" fill="#1aa8f5"/>
<rect x="390.7" y="72.3" width="11.8" height="2.6" fill="#2bf00f"/>
<rect x="402.4" y="72.5" width="11.8" height="2.6" fill="#2bf00f"/>
<rect x="414.1" y="72.5" width="11.8" height="2.6" fill="#2bf00f"/>
<rect x="425.8" y="73.0" width="11.8" height="2.6" fill="#2bf00f"/>
<rect x="437.5" y="73.0" width="11.8" height="2.6" fill="#2bf00f"/>
<rect x="449.2" y="73.0" width="11.8" height="2.6" fill="#2bf00f"/>
<rect x="460.9" y="74.2" width="11.8" height="2.6" fill="#2bf00f"/>
<rect x="472.6" y="74.2" width="11.8" height="2.6" fill="#2bf00f"/>
<rect x="484.3" y="74.2" width="11.8" height="2.6" fill="#2bf00f"/>
<rect x="496.0" y="74.2" width="11.8" height="2.6" fill="#2bf00f"/>
<rect x="507.7" y="74.2" width="11.8" height="2.6" fill="#2bf00f"/>
<rect x="519.4" y="74.2" width="11.8" height="2.6" fill="#2bf00f"/>
<rect x="531.1" y="74.2" width="11.8" height="2.6" fill="#2bf00f"/>
<rect x="542.8" y="74.2" width="11.8" height="2.6" fill="#2bf00f"/>
<rect x="554.5" y="74.2" width="11.8" height="2.6" fill="#2bf00f"/>
<rect x="566.2" y="74.2" width="11.8" height="2.6" fill="#2bf00f"/>
<rect x="577.9" y="74.2" width="11.8" height="2.6" fill="#2bf00f"/>
<rect x="589.6" y="74.2" width="11.8" height="2.6" fill="#2bf00f"/>
<rect x="601.3" y="74.2" width="11.8" height="2.6" fill="#2bf00f"/>
<rect x="613.0" y="74.2" width="11.8" height="2.6" fill="#2bf00f"/>
<rect x="624.7" y="74.2" width="11.8" height="2.6" fill="#2bf00f"/>
<rect x="636.4" y="74.2" width="11.8" height="2.6" fill="#2bf00f"/>
<rect x="648.1" y="74.2" width="11.8" height="2.6" fill="#2bf00f"/>
<rect x="659.8" y="74.2" width="11.8" height="2.6" fill="#2bf00f"/>
<rect x="671.5" y="73.4" width="11.8" height="2.6" fill="#2bf00f"/>
<rect x="683.2" y="74.2" width="11.8" height="2.6" fill="#2bf00f"/>
<rect x="694.9" y="74.2" width="11.8" height="2.6" fill="#2bf00f"/>
<rect x="706.6" y="74.2" width="11.8" height="2.6" fill="#2bf00f"/>
<rect x="718.3" y="73.6" width="11.8" height="2.6" fill="#2bf00f"/>
<rect x="730.0" y="73.6" width="11.8" height="2.6" fill="#2bf00f"/>
<path d="M51.4 19.2V180.0" stroke="#8c8c8c" stroke-width="0.9" fill="none"/>
<path d="M48.4 178.0H756.3" stroke="#000" stroke-width="1.1" fill="none"/>
<path d="M49.1 20.0L51.4 16.0L53.7 20.0Z" fill="#8b1a1a"/>
<path d="M755.5 175.7L759.7 178.0L755.5 180.3Z" fill="#8b1a1a"/>
<text x="388.4" y="18.2" font-size="10.38" text-anchor="middle" fill="#111">Navigator Graph from pix-ascenty-sp-campinas to 2804:7a30:1::1</text>
<text x="37.0" y="181.5" font-size="7.8" text-anchor="end" fill="#111">0</text>
<text x="46.7" y="158.4" font-size="7.8" text-anchor="end" fill="#111">10 m</text>
<text x="46.7" y="135.3" font-size="7.8" text-anchor="end" fill="#111">20 m</text>
<text x="46.7" y="112.2" font-size="7.8" text-anchor="end" fill="#111">30 m</text>
<text x="46.7" y="89.1" font-size="7.8" text-anchor="end" fill="#111">40 m</text>
<text x="46.7" y="66.0" font-size="7.8" text-anchor="end" fill="#111">50 m</text>
<text x="46.7" y="42.9" font-size="7.8" text-anchor="end" fill="#111">60 m</text>
<text transform="translate(11.2 99.4) rotate(-90)" font-size="9.05" text-anchor="middle" fill="#111">Seconds</text>
<text x="63.5" y="187.9" font-size="7.8" text-anchor="middle" fill="#111">09:45</text>
<text x="122.0" y="187.9" font-size="7.8" text-anchor="middle" fill="#111">09:50</text>
<text x="180.5" y="187.9" font-size="7.8" text-anchor="middle" fill="#111">09:55</text>
<text x="239.0" y="187.9" font-size="7.8" text-anchor="middle" fill="#111">10:00</text>
<text x="297.5" y="187.9" font-size="7.8" text-anchor="middle" fill="#111">10:05</text>
<text x="356.0" y="187.9" font-size="7.8" text-anchor="middle" fill="#111">10:10</text>
<text x="414.5" y="187.9" font-size="7.8" text-anchor="middle" fill="#111">10:15</text>
<text x="473.0" y="187.9" font-size="7.8" text-anchor="middle" fill="#111">10:20</text>
<text x="531.5" y="187.9" font-size="7.8" text-anchor="middle" fill="#111">10:25</text>
<text x="590.0" y="187.9" font-size="7.8" text-anchor="middle" fill="#111">10:30</text>
<text x="648.5" y="187.9" font-size="7.8" text-anchor="middle" fill="#111">10:35</text>
<text x="707.0" y="187.9" font-size="7.8" text-anchor="middle" fill="#111">10:40</text>
<text x="11.9" y="201.3" font-size="9.05" fill="#111" text-anchor="start">median rtt:</text>
<text x="83.5" y="201.3" font-size="9.05" fill="#111" text-anchor="start">44.9 ms avg</text>
<text x="155.7" y="201.3" font-size="9.05" fill="#111" text-anchor="start">45.3 ms max</text>
<text x="228.3" y="201.3" font-size="9.05" fill="#111" text-anchor="start">44.7 ms min</text>
<text x="301.0" y="201.3" font-size="9.05" fill="#111" text-anchor="start">44.8 ms now</text>
<text x="373.4" y="201.3" font-size="9.05" fill="#111" text-anchor="start">0.2 ms sd</text>
<text x="435.5" y="201.3" font-size="9.05" fill="#111" text-anchor="start">199.9</text>
<text x="479.2" y="201.3" font-size="9.05" fill="#111" text-anchor="start">am/s</text>
<text x="11.9" y="212.2" font-size="9.05" fill="#111" text-anchor="start">packet loss:</text>
<text x="83.5" y="212.2" font-size="9.05" fill="#111" text-anchor="start">0.06 % avg</text>
<text x="150.4" y="212.2" font-size="9.05" fill="#111" text-anchor="start">3.00 % max</text>
<text x="217.4" y="212.2" font-size="9.05" fill="#111" text-anchor="start">0.00 % min</text>
<text x="284.7" y="212.2" font-size="9.05" fill="#111" text-anchor="start">0.00 % now</text>
<text x="11.9" y="223.1" font-size="9.05" fill="#111" text-anchor="start">loss color:</text>
<rect x="84.3" y="217.0" width="5.9" height="6.3" fill="#26ff00" stroke="#111" stroke-width="1"/>
<text x="95.6" y="223.1" font-size="9.05" fill="#111" text-anchor="start">0</text>
<rect x="113.3" y="217.0" width="5.9" height="6.3" fill="#00b8ff" stroke="#111" stroke-width="1"/>
<text x="124.6" y="223.1" font-size="9.05" fill="#111" text-anchor="start">1</text>
<rect x="142.3" y="217.0" width="5.9" height="6.3" fill="#0059ff" stroke="#111" stroke-width="1"/>
<text x="153.6" y="223.1" font-size="9.05" fill="#111" text-anchor="start">2</text>
<rect x="171.4" y="217.0" width="5.9" height="6.3" fill="#7e00ff" stroke="#111" stroke-width="1"/>
<text x="182.7" y="223.1" font-size="9.05" fill="#111" text-anchor="start">3</text>
<rect x="200.2" y="217.0" width="5.9" height="6.3" fill="#ff00ff" stroke="#111" stroke-width="1"/>
<text x="211.5" y="223.1" font-size="9.05" fill="#111" text-anchor="start">4-7</text>
<rect x="239.8" y="217.0" width="5.9" height="6.3" fill="#ff5500" stroke="#111" stroke-width="1"/>
<text x="251.1" y="223.1" font-size="9.05" fill="#111" text-anchor="start">8-15</text>
<rect x="285.2" y="217.0" width="5.9" height="6.3" fill="#ff0000" stroke="#111" stroke-width="1"/>
<text x="296.5" y="223.1" font-size="9.05" fill="#111" text-anchor="start">16-29</text>
<rect x="335.6" y="217.0" width="5.9" height="6.3" fill="#a00000" stroke="#111" stroke-width="1"/>
<text x="346.9" y="223.1" font-size="9.05" fill="#111" text-anchor="start">30/30</text>
<text x="11.9" y="233.9" font-size="9.05" fill="#111" text-anchor="start">probe:</text>
<text x="83.5" y="233.9" font-size="9.05" fill="#111" text-anchor="start">30 ICMP Echo Pings (56 Bytes) every 60s</text>
<text x="764.6" y="233.9" font-size="9.05" fill="#111" text-anchor="end">Thu Nov 27 10:44:00 2025</text>
<text transform="translate(768.2 3.6) rotate(90)" font-size="6.3" fill="#adadad" letter-spacing="0.12">RRDTOOL / TOBI OETIKER</text>
</g></svg></div><div class="upd" style="top:309px">Última atualização: 27/11/2025 10:44:36</div></div>
<div class="card" style="left:228px;top:724px;height:343px;width:812px"><div class="chead" style="width:810px"><span style="letter-spacing:-0.04px"><b>ASN:</b> 269398 | <b>Servidor:</b> São Paulo - Campinas | <b>Host:</b> <i>45.183.150.54</i></span></div><div class="abs" style="left:16px;top:54px;width:778px;height:241px;overflow:hidden"><svg class="rrd" width="778" height="241" viewBox="0 0 778 241" preserveAspectRatio="none" font-family="'DejaVu Sans Mono','Liberation Mono',monospace">
<rect x="0" y="0" width="778" height="241" fill="#f2f2f2"/>
<path d="M0 0H778V2H2V241H0Z" fill="#cdcdcd"/>
<path d="M778 0V241H0L2 239H776V2Z" fill="#9c9c9c"/>
<g transform="translate(0.3 0.3)">
<rect x="51.4" y="21.2" width="702.9" height="156.8" fill="#fff"/>
<rect x="156.7" y="28.0" width="11.7" height="52.0" fill="#d9d9d9" fill-opacity="0.9"/>
<rect x="226.9" y="47.8" width="11.7" height="32.2" fill="#d9d9d9" fill-opacity="0.9"/>
<rect x="320.5" y="39.4" width="11.7" height="40.6" fill="#d9d9d9" fill-opacity="0.9"/>
<rect x="355.6" y="35.8" width="11.7" height="44.2" fill="#d9d9d9" fill-opacity="0.9"/>
<rect x="554.5" y="27.4" width="11.7" height="52.6" fill="#d9d9d9" fill-opacity="0.9"/>
<rect x="683.2" y="51.6" width="11.7" height="28.4" fill="#d9d9d9" fill-opacity="0.9"/>
<rect x="718.3" y="33.7" width="11.7" height="46.3" fill="#d9d9d9" fill-opacity="0.9"/>
<path d="M50.4 172.30H755.3M50.4 167.37H755.3M50.4 162.45H755.3M50.4 157.52H755.3M50.4 147.68H755.3M50.4 142.75H755.3M50.4 137.83H755.3M50.4 132.90H755.3M50.4 123.06H755.3M50.4 118.13H755.3M50.4 113.21H755.3M50.4 108.28H755.3M50.4 98.44H755.3M50.4 93.51H755.3M50.4 88.59H755.3M50.4 83.66H755.3M50.4 73.82H755.3M50.4 68.89H755.3M50.4 63.97H755.3M50.4 59.04H755.3M50.4 49.20H755.3M50.4 44.27H755.3M50.4 39.35H755.3M50.4 34.42H755.3M50.4 24.58H755.3" stroke="#8f8f8f" stroke-opacity="0.32" stroke-width="1.1" stroke-dasharray="1.2 1.6" fill="none"/>
<path d="M51.40 19.7V179.0M74.80 19.7V179.0M86.50 19.7V179.0M98.20 19.7V179.0M109.90 19.7V179.0M133.30 19.7V179.0M145.00 19.7V179.0M156.70 19.7V179.0M168.40 19.7V179.0M191.80 19.7V179.0M203.50 19.7V179.0M215.20 19.7V179.0M226.90 19.7V179.0M250.30 19.7V179.0M262.00 19.7V179.0M273.70 19.7V179.0M285.40 19.7V179.0M308.80 19.7V179.0M320.50 19.7V179.0M332.20 19.7V179.0M343.90 19.7V179.0M367.30 19.7V179.0M379.00 19.7V179.0M390.70 19.7V179.0M402.40 19.7V179.0M425.80 19.7V179.0M437.50 19.7V179.0M449.20 19.7V179.0M460.90 19.7V179.0M484.30 19.7V179.0M496.00 19.7V179.0M507.70 19.7V179.0M519.40 19.7V179.0M542.80 19.7V179.0M554.50 19.7V179.0M566.20 19.7V179.0M577.90 19.7V179.0M601.30 19.7V179.0M613.00 19.7V179.0M624.70 19.7V179.0M636.40 19.7V179.0M659.80 19.7V179.0M671.50 19.7V179.0M683.20 19.7V179.0M694.90 19.7V179.0M718.30 19.7V179.0M730.00 19.7V179.0M741.70 19.7V179.0M753.40 19.7V179.0" stroke="#8f8f8f" stroke-opacity="0.2" stroke-width="1.1" stroke-dasharray="1.2 1.6" fill="none"/>
<path d="M49.4 152.60H755.3M49.4 127.98H755.3M49.4 103.36H755.3M49.4 78.74H755.3M49.4 54.12H755.3M49.4 29.50H755.3" stroke="#e8686c" stroke-opacity="0.42" stroke-width="1.1" stroke-dasharray="1.2 1.6" fill="none"/>
<path d="M63.10 18.7V180.0M121.60 18.7V180.0M180.10 18.7V180.0M238.60 18.7V180.0M297.10 18.7V180.0M355.60 18.7V180.0M414.10 18.7V180.0M472.60 18.7V180.0M531.10 18.7V180.0M589.60 18.7V180.0M648.10 18.7V180.0M706.60 18.7V180.0" stroke="#e8686c" stroke-opacity="0.48" stroke-width="1.1" stroke-dasharray="1.2 1.6" fill="none"/>
<rect x="51.4" y="78.7" width="11.8" height="2.6" fill="#2bf00f"/>
<rect x="63.1" y="78.7" width="11.8" height="2.6" fill="#2bf00f"/>
<rect x="74.8" y="78.7" width="11.8" height="2.6" fill="#2bf00f"/>
<rect x="86.5" y="78.7" width="11.8" height="2.6" fill="#2bf00f"/>
<rect x="98.2" y="78.7" width="11.8" height="2.6" fill="#2bf00f"/>
<rect x="109.9" y="78.7" width="11.8" height="2.6" fill="#2bf00f"/>
<rect x="121.6" y="78.7" width="11.8" height="2.6" fill="#2bf00f"/>
<rect x="133.3" y="78.7" width="11.8" height="2.6" fill="#2bf00f"/>
<rect x="145.0" y="78.7" width="11.8" height="2.6" fill="#2bf00f"/>
<rect x="156.7" y="78.7" width="11.8" height="2.6" fill="#2bf00f"/>
<rect x="168.4" y="78.7" width="11.8" height="2.6" fill="#2bf00f"/>
<rect x="180.1" y="78.7" width="11.8" height="2.6" fill="#2bf00f"/>
<rect x="191.8" y="78.7" width="11.8" height="2.6" fill="#2bf00f"/>
<rect x="203.5" y="78.7" width="11.8" height="2.6" fill="#2bf00f"/>
<rect x="215.2" y="78.7" width="11.8" height="2.6" fill="#2bf00f"/>
<rect x="226.9" y="78.7" width="11.8" height="2.6" fill="#2bf00f"/>
<rect x="238.6" y="78.7" width="11.8" height="2.6" fill="#2bf00f"/>
<rect x="250.3" y="78.7" width="11.8" height="2.6" fill="#2bf00f"/>
<rect x="262.0" y="78.7" width="11.8" height="2.6" fill="#2bf00f"/>
<rect x="273.7" y="78.7" width="11.8" height="2.6" fill="#2bf00f"/>
<rect x="285.4" y="78.7" width="11.8" height="2.6" fill="#2bf00f"/>
<rect x="297.1" y="78.7" width="11.8" height="2.6" fill="#2bf00f"/>
<rect x="308.8" y="78.7" width="11.8" height="2.6" fill="#2bf00f"/>
<rect x="320.5" y="78.7" width="11.8" height="2.6" fill="#2bf00f"/>
<rect x="332.2" y="78.7" width="11.8" height="2.6" fill="#2bf00f"/>
<rect x="343.9" y="78.7" width="11.8" height="2.6" fill="#2bf00f"/>
<rect x="355.6" y="78.7" width="11.8" height="2.6" fill="#2bf00f"/>
<rect x="367.3" y="78.7" width="11.8" height="2.6" fill="#2bf00f"/>
<rect x="379.0" y="78.7" width="11.8" height="2.6" fill="#2bf00f"/>
<rect x="390.7" y="78.7" width="11.8" height="2.6" fill="#2bf00f"/>
<rect x="402.4" y="78.7" width="11.8" height="2.6" fill="#2bf00f"/>
<rect x="414.1" y="78.7" width="11.8" height="2.6" fill="#2bf00f"/>
<rect x="425.8" y="78.7" width="11.8" height="2.6" fill="#2bf00f"/>
<rect x="437.5" y="78.7" width="11.8" height="2.6" fill="#2bf00f"/>
<rect x="449.2" y="78.7" width="11.8" height="2.6" fill="#2bf00f"/>
<rect x="460.9" y="78.7" width="11.8" height="2.6" fill="#2bf00f"/>
<rect x="472.6" y="78.7" width="11.8" height="2.6" fill="#2bf00f"/>
<rect x="484.3" y="78.7" width="11.8" height="2.6" fill="#2bf00f"/>
<rect x="496.0" y="78.7" width="11.8" height="2.6" fill="#2bf00f"/>
<rect x="507.7" y="78.7" width="11.8" height="2.6" fill="#2bf00f"/>
<rect x="519.4" y="78.7" width="11.8" height="2.6" fill="#2bf00f"/>
<rect x="531.1" y="78.7" width="11.8" height="2.6" fill="#2bf00f"/>
<rect x="542.8" y="78.7" width="11.8" height="2.6" fill="#2bf00f"/>
<rect x="554.5" y="78.7" width="11.8" height="2.6" fill="#2bf00f"/>
<rect x="566.2" y="78.7" width="11.8" height="2.6" fill="#2bf00f"/>
<rect x="577.9" y="78.7" width="11.8" height="2.6" fill="#2bf00f"/>
<rect x="589.6" y="78.7" width="11.8" height="2.6" fill="#2bf00f"/>
<rect x="601.3" y="78.7" width="11.8" height="2.6" fill="#2bf00f"/>
<rect x="613.0" y="78.7" width="11.8" height="2.6" fill="#2bf00f"/>
<rect x="624.7" y="78.7" width="11.8" height="2.6" fill="#2bf00f"/>
<rect x="636.4" y="78.7" width="11.8" height="2.6" fill="#2bf00f"/>
<rect x="648.1" y="78.7" width="11.8" height="2.6" fill="#2bf00f"/>
<rect x="659.8" y="78.7" width="11.8" height="2.6" fill="#2bf00f"/>
<rect x="671.5" y="78.7" width="11.8" height="2.6" fill="#2bf00f"/>
<rect x="683.2" y="78.7" width="11.8" height="2.6" fill="#2bf00f"/>
<rect x="694.9" y="78.7" width="11.8" height="2.6" fill="#2bf00f"/>
<rect x="706.6" y="78.7" width="11.8" height="2.6" fill="#2bf00f"/>
<rect x="718.3" y="78.7" width="11.8" height="2.6" fill="#2bf00f"/>
<rect x="730.0" y="78.7" width="11.8" height="2.6" fill="#2bf00f"/>
<path d="M51.4 19.2V180.0" stroke="#8c8c8c" stroke-width="0.9" fill="none"/>
<path d="M48.4 178.0H756.3" stroke="#000" stroke-width="1.1" fill="none"/>
<path d="M49.1 20.0L51.4 16.0L53.7 20.0Z" fill="#8b1a1a"/>
<path d="M755.5 175.7L759.7 178.0L755.5 180.3Z" fill="#8b1a1a"/>
<text x="388.4" y="18.2" font-size="10.38" text-anchor="middle" fill="#111">Navigator Graph from pix-ascenty-sp-campinas to 45.183.150.54</text>
<text x="37.0" y="180.1" font-size="7.8" text-anchor="end" fill="#111">0</text>
<text x="46.7" y="155.5" font-size="7.8" text-anchor="end" fill="#111">10 m</text>
<text x="46.7" y="130.9" font-size="7.8" text-anchor="end" fill="#111">20 m</text>
<text x="46.7" y="106.3" font-size="7.8" text-anchor="end" fill="#111">30 m</text>
<text x="46.7" y="81.6" font-size="7.8" text-anchor="end" fill="#111">40 m</text>
<text x="46.7" y="57.0" font-size="7.8" text-anchor="end" fill="#111">50 m</text>
<text x="46.7" y="32.4" font-size="7.8" text-anchor="end" fill="#111">60 m</text>
<text transform="translate(11.2 99.4) rotate(-90)" font-size="9.05" text-anchor="middle" fill="#111">Seconds</text>
<text x="63.5" y="187.9" font-size="7.8" text-anchor="middle" fill="#111">09:45</text>
<text x="122.0" y="187.9" font-size="7.8" text-anchor="middle" fill="#111">09:50</text>
<text x="180.5" y="187.9" font-size="7.8" text-anchor="middle" fill="#111">09:55</text>
<text x="239.0" y="187.9" font-size="7.8" text-anchor="middle" fill="#111">10:00</text>
<text x="297.5" y="187.9" font-size="7.8" text-anchor="middle" fill="#111">10:05</text>
<text x="356.0" y="187.9" font-size="7.8" text-anchor="middle" fill="#111">10:10</text>
<text x="414.5" y="187.9" font-size="7.8" text-anchor="middle" fill="#111">10:15</text>
<text x="473.0" y="187.9" font-size="7.8" text-anchor="middle" fill="#111">10:20</text>
<text x="531.5" y="187.9" font-size="7.8" text-anchor="middle" fill="#111">10:25</text>
<text x="590.0" y="187.9" font-size="7.8" text-anchor="middle" fill="#111">10:30</text>
<text x="648.5" y="187.9" font-size="7.8" text-anchor="middle" fill="#111">10:35</text>
<text x="707.0" y="187.9" font-size="7.8" text-anchor="middle" fill="#111">10:40</text>
<text x="11.9" y="201.3" font-size="9.05" fill="#111" text-anchor="start">median rtt:</text>
<text x="83.5" y="201.3" font-size="9.05" fill="#111" text-anchor="start">41.7 ms avg</text>
<text x="155.7" y="201.3" font-size="9.05" fill="#111" text-anchor="start">42.1 ms max</text>
<text x="228.3" y="201.3" font-size="9.05" fill="#111" text-anchor="start">41.5 ms min</text>
<text x="301.0" y="201.3" font-size="9.05" fill="#111" text-anchor="start">41.7 ms now</text>
<text x="373.4" y="201.3" font-size="9.05" fill="#111" text-anchor="start">0.2 ms sd</text>
<text x="435.5" y="201.3" font-size="9.05" fill="#111" text-anchor="start">180.3</text>
<text x="479.2" y="201.3" font-size="9.05" fill="#111" text-anchor="start">am/s</text>
<text x="11.9" y="212.2" font-size="9.05" fill="#111" text-anchor="start">packet loss:</text>
<text x="83.5" y="212.2" font-size="9.05" fill="#111" text-anchor="start">0.00 % avg</text>
<text x="150.4" y="212.2" font-size="9.05" fill="#111" text-anchor="start">0.00 % max</text>
<text x="217.4" y="212.2" font-size="9.05" fill="#111" text-anchor="start">0.00 % min</text>
<text x="284.7" y="212.2" font-size="9.05" fill="#111" text-anchor="start">0.00 % now</text>
<text x="11.9" y="223.1" font-size="9.05" fill="#111" text-anchor="start">loss color:</text>
<rect x="84.3" y="217.0" width="5.9" height="6.3" fill="#26ff00" stroke="#111" stroke-width="1"/>
<text x="95.6" y="223.1" font-size="9.05" fill="#111" text-anchor="start">0</text>
<rect x="113.3" y="217.0" width="5.9" height="6.3" fill="#00b8ff" stroke="#111" stroke-width="1"/>
<text x="124.6" y="223.1" font-size="9.05" fill="#111" text-anchor="start">1</text>
<rect x="142.3" y="217.0" width="5.9" height="6.3" fill="#0059ff" stroke="#111" stroke-width="1"/>
<text x="153.6" y="223.1" font-size="9.05" fill="#111" text-anchor="start">2</text>
<rect x="171.4" y="217.0" width="5.9" height="6.3" fill="#7e00ff" stroke="#111" stroke-width="1"/>
<text x="182.7" y="223.1" font-size="9.05" fill="#111" text-anchor="start">3</text>
<rect x="200.2" y="217.0" width="5.9" height="6.3" fill="#ff00ff" stroke="#111" stroke-width="1"/>
<text x="211.5" y="223.1" font-size="9.05" fill="#111" text-anchor="start">4-7</text>
<rect x="239.8" y="217.0" width="5.9" height="6.3" fill="#ff5500" stroke="#111" stroke-width="1"/>
<text x="251.1" y="223.1" font-size="9.05" fill="#111" text-anchor="start">8-15</text>
<rect x="285.2" y="217.0" width="5.9" height="6.3" fill="#ff0000" stroke="#111" stroke-width="1"/>
<text x="296.5" y="223.1" font-size="9.05" fill="#111" text-anchor="start">16-29</text>
<rect x="335.6" y="217.0" width="5.9" height="6.3" fill="#a00000" stroke="#111" stroke-width="1"/>
<text x="346.9" y="223.1" font-size="9.05" fill="#111" text-anchor="start">30/30</text>
<text x="11.9" y="233.9" font-size="9.05" fill="#111" text-anchor="start">probe:</text>
<text x="83.5" y="233.9" font-size="9.05" fill="#111" text-anchor="start">30 ICMP Echo Pings (56 Bytes) every 60s</text>
<text x="764.6" y="233.9" font-size="9.05" fill="#111" text-anchor="end">Thu Nov 27 10:44:00 2025</text>
<text transform="translate(768.2 3.6) rotate(90)" font-size="6.3" fill="#adadad" letter-spacing="0.12">RRDTOOL / TOBI OETIKER</text>
</g></svg></div><div class="upd" style="top:309px">Última atualização: 27/11/2025 10:44:35</div></div>
<div class="card" style="left:1062px;top:724px;height:343px;width:813px"><div class="chead" style="width:811px"><span style="letter-spacing:-0.06px"><b>ASN:</b> 269398 | <b>Servidor:</b> São Paulo - Campinas | <b>Host:</b> <i>2804:6404:0:f::1</i></span></div><div class="abs" style="left:17px;top:54px;width:778px;height:241px;overflow:hidden"><svg class="rrd" width="777" height="241" viewBox="0 0 778 241" preserveAspectRatio="none" font-family="'DejaVu Sans Mono','Liberation Mono',monospace">
<rect x="0" y="0" width="778" height="241" fill="#f2f2f2"/>
<path d="M0 0H778V2H2V241H0Z" fill="#cdcdcd"/>
<path d="M778 0V241H0L2 239H776V2Z" fill="#9c9c9c"/>
<g transform="translate(0.3 0.3)">
<rect x="51.4" y="21.2" width="702.9" height="156.8" fill="#fff"/>
<rect x="613.0" y="34.1" width="11.7" height="45.9" fill="#d9d9d9" fill-opacity="0.9"/>
<path d="M50.4 172.94H755.3M50.4 168.08H755.3M50.4 163.22H755.3M50.4 158.36H755.3M50.4 148.64H755.3M50.4 143.78H755.3M50.4 138.92H755.3M50.4 134.06H755.3M50.4 124.34H755.3M50.4 119.48H755.3M50.4 114.62H755.3M50.4 109.76H755.3M50.4 100.04H755.3M50.4 95.18H755.3M50.4 90.32H755.3M50.4 85.46H755.3M50.4 75.74H755.3M50.4 70.88H755.3M50.4 66.02H755.3M50.4 61.16H755.3M50.4 51.44H755.3M50.4 46.58H755.3M50.4 41.72H755.3M50.4 36.86H755.3M50.4 27.14H755.3M50.4 22.28H755.3" stroke="#8f8f8f" stroke-opacity="0.32" stroke-width="1.1" stroke-dasharray="1.2 1.6" fill="none"/>
<path d="M51.40 19.7V179.0M74.80 19.7V179.0M86.50 19.7V179.0M98.20 19.7V179.0M109.90 19.7V179.0M133.30 19.7V179.0M145.00 19.7V179.0M156.70 19.7V179.0M168.40 19.7V179.0M191.80 19.7V179.0M203.50 19.7V179.0M215.20 19.7V179.0M226.90 19.7V179.0M250.30 19.7V179.0M262.00 19.7V179.0M273.70 19.7V179.0M285.40 19.7V179.0M308.80 19.7V179.0M320.50 19.7V179.0M332.20 19.7V179.0M343.90 19.7V179.0M367.30 19.7V179.0M379.00 19.7V179.0M390.70 19.7V179.0M402.40 19.7V179.0M425.80 19.7V179.0M437.50 19.7V179.0M449.20 19.7V179.0M460.90 19.7V179.0M484.30 19.7V179.0M496.00 19.7V179.0M507.70 19.7V179.0M519.40 19.7V179.0M542.80 19.7V179.0M554.50 19.7V179.0M566.20 19.7V179.0M577.90 19.7V179.0M601.30 19.7V179.0M613.00 19.7V179.0M624.70 19.7V179.0M636.40 19.7V179.0M659.80 19.7V179.0M671.50 19.7V179.0M683.20 19.7V179.0M694.90 19.7V179.0M718.30 19.7V179.0M730.00 19.7V179.0M741.70 19.7V179.0M753.40 19.7V179.0" stroke="#8f8f8f" stroke-opacity="0.2" stroke-width="1.1" stroke-dasharray="1.2 1.6" fill="none"/>
<path d="M49.4 153.50H755.3M49.4 129.20H755.3M49.4 104.90H755.3M49.4 80.60H755.3M49.4 56.30H755.3M49.4 32.00H755.3" stroke="#e8686c" stroke-opacity="0.42" stroke-width="1.1" stroke-dasharray="1.2 1.6" fill="none"/>
<path d="M63.10 18.7V180.0M121.60 18.7V180.0M180.10 18.7V180.0M238.60 18.7V180.0M297.10 18.7V180.0M355.60 18.7V180.0M414.10 18.7V180.0M472.60 18.7V180.0M531.10 18.7V180.0M589.60 18.7V180.0M648.10 18.7V180.0M706.60 18.7V180.0" stroke="#e8686c" stroke-opacity="0.48" stroke-width="1.1" stroke-dasharray="1.2 1.6" fill="none"/>
<rect x="51.4" y="78.7" width="11.8" height="2.6" fill="#2bf00f"/>
<rect x="63.1" y="78.7" width="11.8" height="2.6" fill="#2bf00f"/>
<rect x="74.8" y="78.7" width="11.8" height="2.6" fill="#2bf00f"/>
<rect x="86.5" y="78.7" width="11.8" height="2.6" fill="#2bf00f"/>
<rect x="98.2" y="78.7" width="11.8" height="2.6" fill="#2bf00f"/>
<rect x="109.9" y="78.7" width="11.8" height="2.6" fill="#2bf00f"/>
<rect x="121.6" y="78.7" width="11.8" height="2.6" fill="#2bf00f"/>
<rect x="133.3" y="78.7" width="11.8" height="2.6" fill="#2bf00f"/>
<rect x="145.0" y="78.7" width="11.8" height="2.6" fill="#2bf00f"/>
<rect x="156.7" y="78.7" width="11.8" height="2.6" fill="#2bf00f"/>
<rect x="168.4" y="78.7" width="11.8" height="2.6" fill="#2bf00f"/>
<rect x="180.1" y="78.7" width="11.8" height="2.6" fill="#2bf00f"/>
<rect x="191.8" y="78.7" width="11.8" height="2.6" fill="#2bf00f"/>
<rect x="203.5" y="78.7" width="11.8" height="2.6" fill="#2bf00f"/>
<rect x="215.2" y="78.7" width="11.8" height="2.6" fill="#2bf00f"/>
<rect x="226.9" y="78.7" width="11.8" height="2.6" fill="#2bf00f"/>
<rect x="238.6" y="78.7" width="11.8" height="2.6" fill="#2bf00f"/>
<rect x="250.3" y="78.7" width="11.8" height="2.6" fill="#2bf00f"/>
<rect x="262.0" y="78.7" width="11.8" height="2.6" fill="#2bf00f"/>
<rect x="273.7" y="78.7" width="11.8" height="2.6" fill="#2bf00f"/>
<rect x="285.4" y="78.7" width="11.8" height="2.6" fill="#2bf00f"/>
<rect x="297.1" y="78.7" width="11.8" height="2.6" fill="#2bf00f"/>
<rect x="308.8" y="78.7" width="11.8" height="2.6" fill="#2bf00f"/>
<rect x="320.5" y="78.7" width="11.8" height="2.6" fill="#2bf00f"/>
<rect x="332.2" y="78.7" width="11.8" height="2.6" fill="#2bf00f"/>
<rect x="343.9" y="78.7" width="11.8" height="2.6" fill="#2bf00f"/>
<rect x="355.6" y="78.7" width="11.8" height="2.6" fill="#2bf00f"/>
<rect x="367.3" y="78.7" width="11.8" height="2.6" fill="#2bf00f"/>
<rect x="379.0" y="78.7" width="11.8" height="2.6" fill="#2bf00f"/>
<rect x="390.7" y="78.7" width="11.8" height="2.6" fill="#2bf00f"/>
<rect x="402.4" y="78.7" width="11.8" height="2.6" fill="#2bf00f"/>
<rect x="414.1" y="78.7" width="11.8" height="2.6" fill="#2bf00f"/>
<rect x="425.8" y="78.7" width="11.8" height="2.6" fill="#2bf00f"/>
<rect x="437.5" y="78.7" width="11.8" height="2.6" fill="#2bf00f"/>
<rect x="449.2" y="78.7" width="11.8" height="2.6" fill="#2bf00f"/>
<rect x="460.9" y="78.7" width="11.8" height="2.6" fill="#2bf00f"/>
<rect x="472.6" y="78.7" width="11.8" height="2.6" fill="#2bf00f"/>
<rect x="484.3" y="78.7" width="11.8" height="2.6" fill="#2bf00f"/>
<rect x="496.0" y="78.7" width="11.8" height="2.6" fill="#2bf00f"/>
<rect x="507.7" y="78.7" width="11.8" height="2.6" fill="#2bf00f"/>
<rect x="519.4" y="78.7" width="11.8" height="2.6" fill="#2bf00f"/>
<rect x="531.1" y="78.7" width="11.8" height="2.6" fill="#2bf00f"/>
<rect x="542.8" y="78.7" width="11.8" height="2.6" fill="#2bf00f"/>
<rect x="554.5" y="78.7" width="11.8" height="2.6" fill="#2bf00f"/>
<rect x="566.2" y="78.7" width="11.8" height="2.6" fill="#2bf00f"/>
<rect x="577.9" y="78.7" width="11.8" height="2.6" fill="#2bf00f"/>
<rect x="589.6" y="78.7" width="11.8" height="2.6" fill="#2bf00f"/>
<rect x="601.3" y="78.7" width="11.8" height="2.6" fill="#2bf00f"/>
<rect x="613.0" y="78.7" width="11.8" height="2.6" fill="#2bf00f"/>
<rect x="624.7" y="78.7" width="11.8" height="2.6" fill="#2bf00f"/>
<rect x="636.4" y="78.7" width="11.8" height="2.6" fill="#2bf00f"/>
<rect x="648.1" y="78.7" width="11.8" height="2.6" fill="#2bf00f"/>
<rect x="659.8" y="78.7" width="11.8" height="2.6" fill="#2bf00f"/>
<rect x="671.5" y="78.7" width="11.8" height="2.6" fill="#2bf00f"/>
<rect x="683.2" y="78.7" width="11.8" height="2.6" fill="#2bf00f"/>
<rect x="694.9" y="78.7" width="11.8" height="2.6" fill="#2bf00f"/>
<rect x="706.6" y="78.7" width="11.8" height="2.6" fill="#2bf00f"/>
<rect x="718.3" y="78.7" width="11.8" height="2.6" fill="#2bf00f"/>
<rect x="730.0" y="78.7" width="11.8" height="2.6" fill="#2bf00f"/>
<path d="M51.4 19.2V180.0" stroke="#8c8c8c" stroke-width="0.9" fill="none"/>
<path d="M48.4 178.0H756.3" stroke="#000" stroke-width="1.1" fill="none"/>
<path d="M49.1 20.0L51.4 16.0L53.7 20.0Z" fill="#8b1a1a"/>
<path d="M755.5 175.7L759.7 178.0L755.5 180.3Z" fill="#8b1a1a"/>
<text x="388.4" y="18.2" font-size="10.38" text-anchor="middle" fill="#111">Navigator Graph from pix-ascenty-sp-campinas to 2804:6404:0:f::1</text>
<text x="37.0" y="180.7" font-size="7.8" text-anchor="end" fill="#111">0</text>
<text x="46.7" y="156.4" font-size="7.8" text-anchor="end" fill="#111">10 m</text>
<text x="46.7" y="132.1" font-size="7.8" text-anchor="end" fill="#111">20 m</text>
<text x="46.7" y="107.8" font-size="7.8" text-anchor="end" fill="#111">30 m</text>
<text x="46.7" y="83.5" font-size="7.8" text-anchor="end" fill="#111">40 m</text>
<text x="46.7" y="59.2" font-size="7.8" text-anchor="end" fill="#111">50 m</text>
<text x="46.7" y="34.9" font-size="7.8" text-anchor="end" fill="#111">60 m</text>
<text transform="translate(11.2 99.4) rotate(-90)" font-size="9.05" text-anchor="middle" fill="#111">Seconds</text>
<text x="63.5" y="187.9" font-size="7.8" text-anchor="middle" fill="#111">09:45</text>
<text x="122.0" y="187.9" font-size="7.8" text-anchor="middle" fill="#111">09:50</text>
<text x="180.5" y="187.9" font-size="7.8" text-anchor="middle" fill="#111">09:55</text>
<text x="239.0" y="187.9" font-size="7.8" text-anchor="middle" fill="#111">10:00</text>
<text x="297.5" y="187.9" font-size="7.8" text-anchor="middle" fill="#111">10:05</text>
<text x="356.0" y="187.9" font-size="7.8" text-anchor="middle" fill="#111">10:10</text>
<text x="414.5" y="187.9" font-size="7.8" text-anchor="middle" fill="#111">10:15</text>
<text x="473.0" y="187.9" font-size="7.8" text-anchor="middle" fill="#111">10:20</text>
<text x="531.5" y="187.9" font-size="7.8" text-anchor="middle" fill="#111">10:25</text>
<text x="590.0" y="187.9" font-size="7.8" text-anchor="middle" fill="#111">10:30</text>
<text x="648.5" y="187.9" font-size="7.8" text-anchor="middle" fill="#111">10:35</text>
<text x="707.0" y="187.9" font-size="7.8" text-anchor="middle" fill="#111">10:40</text>
<text x="11.9" y="201.3" font-size="9.05" fill="#111" text-anchor="start">median rtt:</text>
<text x="83.5" y="201.3" font-size="9.05" fill="#111" text-anchor="start">43.1 ms avg</text>
<text x="155.7" y="201.3" font-size="9.05" fill="#111" text-anchor="start">43.5 ms max</text>
<text x="228.3" y="201.3" font-size="9.05" fill="#111" text-anchor="start">42.9 ms min</text>
<text x="301.0" y="201.3" font-size="9.05" fill="#111" text-anchor="start">43.0 ms now</text>
<text x="373.4" y="201.3" font-size="9.05" fill="#111" text-anchor="start">0.2 ms sd</text>
<text x="435.5" y="201.3" font-size="9.05" fill="#111" text-anchor="start">210.4</text>
<text x="479.2" y="201.3" font-size="9.05" fill="#111" text-anchor="start">am/s</text>
<text x="11.9" y="212.2" font-size="9.05" fill="#111" text-anchor="start">packet loss:</text>
<text x="83.5" y="212.2" font-size="9.05" fill="#111" text-anchor="start">0.00 % avg</text>
<text x="150.4" y="212.2" font-size="9.05" fill="#111" text-anchor="start">0.00 % max</text>
<text x="217.4" y="212.2" font-size="9.05" fill="#111" text-anchor="start">0.00 % min</text>
<text x="284.7" y="212.2" font-size="9.05" fill="#111" text-anchor="start">0.00 % now</text>
<text x="11.9" y="223.1" font-size="9.05" fill="#111" text-anchor="start">loss color:</text>
<rect x="84.3" y="217.0" width="5.9" height="6.3" fill="#26ff00" stroke="#111" stroke-width="1"/>
<text x="95.6" y="223.1" font-size="9.05" fill="#111" text-anchor="start">0</text>
<rect x="113.3" y="217.0" width="5.9" height="6.3" fill="#00b8ff" stroke="#111" stroke-width="1"/>
<text x="124.6" y="223.1" font-size="9.05" fill="#111" text-anchor="start">1</text>
<rect x="142.3" y="217.0" width="5.9" height="6.3" fill="#0059ff" stroke="#111" stroke-width="1"/>
<text x="153.6" y="223.1" font-size="9.05" fill="#111" text-anchor="start">2</text>
<rect x="171.4" y="217.0" width="5.9" height="6.3" fill="#7e00ff" stroke="#111" stroke-width="1"/>
<text x="182.7" y="223.1" font-size="9.05" fill="#111" text-anchor="start">3</text>
<rect x="200.2" y="217.0" width="5.9" height="6.3" fill="#ff00ff" stroke="#111" stroke-width="1"/>
<text x="211.5" y="223.1" font-size="9.05" fill="#111" text-anchor="start">4-7</text>
<rect x="239.8" y="217.0" width="5.9" height="6.3" fill="#ff5500" stroke="#111" stroke-width="1"/>
<text x="251.1" y="223.1" font-size="9.05" fill="#111" text-anchor="start">8-15</text>
<rect x="285.2" y="217.0" width="5.9" height="6.3" fill="#ff0000" stroke="#111" stroke-width="1"/>
<text x="296.5" y="223.1" font-size="9.05" fill="#111" text-anchor="start">16-29</text>
<rect x="335.6" y="217.0" width="5.9" height="6.3" fill="#a00000" stroke="#111" stroke-width="1"/>
<text x="346.9" y="223.1" font-size="9.05" fill="#111" text-anchor="start">30/30</text>
<text x="11.9" y="233.9" font-size="9.05" fill="#111" text-anchor="start">probe:</text>
<text x="83.5" y="233.9" font-size="9.05" fill="#111" text-anchor="start">30 ICMP Echo Pings (56 Bytes) every 60s</text>
<text x="764.6" y="233.9" font-size="9.05" fill="#111" text-anchor="end">Thu Nov 27 10:44:00 2025</text>
<text transform="translate(768.2 3.6) rotate(90)" font-size="6.3" fill="#adadad" letter-spacing="0.12">RRDTOOL / TOBI OETIKER</text>
</g></svg></div><div class="upd" style="top:309px">Última atualização: 27/11/2025 10:44:36</div></div>
</body></html>
